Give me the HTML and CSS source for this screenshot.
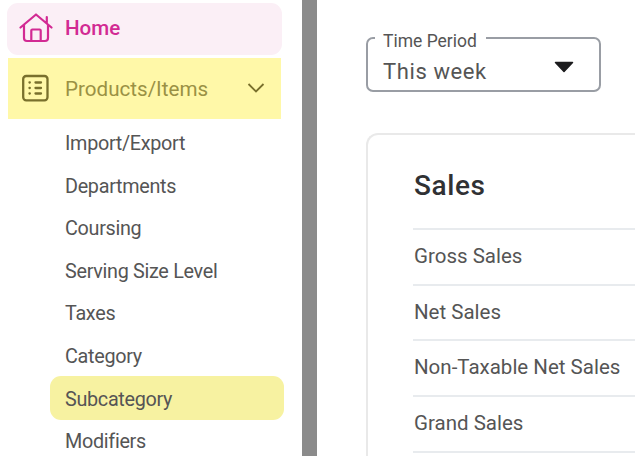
FILE: index.html
```html
<!DOCTYPE html>
<html lang="en">
<head>
<meta charset="utf-8">
<title>Home</title>
<link rel="stylesheet" href="styles.css">
</head>
<body>
<div class="app">
  <nav class="sidebar">
    <a class="nav-item home">
      <svg class="nav-icon" viewBox="0 0 34 32" fill="none" stroke="currentColor" stroke-width="2.2" stroke-linecap="round" stroke-linejoin="round">
        <path d="M1.500 15.500 17 2.500 32.500 15.500M5 13V26q0 3 3 3H26q3 0 3-3V13M12.300 29V18.500q0-1 1-1h7.400q1 0 1 1V29M27.800 10.500V5"/>
      </svg>
      <span class="label">Home</span>
    </a>
    <a class="nav-item products">
      <svg class="nav-icon" viewBox="0 0 34 32" fill="none" stroke="currentColor" stroke-width="2.3" stroke-linecap="round">
        <rect x="5.200" y="3" width="24.300" height="24.300" rx="3"/>
        <path d="M11.500 9.500h.3M11.500 15h.3M11.500 20.500h.3M17.500 9.500h5.500M17.500 15h5.500M17.500 20.500h5.500"/>
      </svg>
      <span class="label">Products/Items</span>
      <svg class="chevron" viewBox="0 0 18 12" fill="none" stroke="currentColor" stroke-width="1.800"><path d="M1.500 1 9 8.500 16.500 1"/></svg>
    </a>
    <ul class="submenu">
      <li><span>Import/Export</span></li>
      <li><span>Departments</span></li>
      <li><span>Coursing</span></li>
      <li><span>Serving Size Level</span></li>
      <li><span>Taxes</span></li>
      <li><span>Category</span></li>
      <li class="selected"><span>Subcategory</span></li>
      <li><span>Modifiers</span></li>
    </ul>
  </nav>
  <div class="divider"></div>
  <main class="content">
    <fieldset class="period">
      <legend><span>Time Period</span></legend>
      <div class="value">
        <span>This week</span>
        <svg class="caret" viewBox="0 0 20 12"><path d="M1.500 1.500h17L10 10.500z" fill="#1c1c1e" stroke="#1c1c1e" stroke-width="1.500" stroke-linejoin="round"/></svg>
      </div>
    </fieldset>
    <section class="card">
      <h2><span>Sales</span></h2>
      <div class="row"><span>Gross Sales</span></div>
      <div class="row"><span>Net Sales</span></div>
      <div class="row"><span>Non-Taxable Net Sales</span></div>
      <div class="row"><span>Grand Sales</span></div>
      <div class="row"></div>
    </section>
  </main>
</div>
</body>
</html>
```

FILE: styles.css
```css
* { box-sizing: border-box; }
body {
  margin: 0;
  background: #fff;
  color: #555;
  font-family: Roboto, "Liberation Sans", sans-serif;
  overflow: hidden;
}
.app { display: flex; width: 635px; height: 456px; overflow: hidden; }
.sidebar { flex: 0 0 302px; padding: 3px 20px 0 7px; }
.nav-item { display: flex; align-items: center; }
.nav-icon { width: 34px; height: 32px; flex: none; }
.home {
  height: 52px;
  padding: 0 0 2px 12px;
  border-radius: 11px;
  background: #fbeff6;
  color: #d22a93;
}
.home .label { margin-left: 12px; font-size: 20.600px; font-weight: 500; }
.products {
  height: 61px;
  margin: 3px 1px 0 1px;
  padding: 0 16px 0 10px;
  background: #fff8a8;
  color: #79702c;
}
.products .label { margin-left: 13px; font-size: 20.600px; color: #9a9144; }
.chevron { width: 18px; height: 12px; margin-left: auto; }
.submenu {
  list-style: none;
  margin: 2px 0 0 43px;
  padding: 0;
  font-size: 19.800px;
  letter-spacing: -0.300px;
}
.submenu li {
  height: 42.600px;
  padding: 2.600px 0 0 15px;
  display: flex;
  align-items: center;
}
.submenu .selected {
  height: 43.600px;
  margin: -0.500px -2px -0.500px 0;
  border-radius: 11px;
  background: #f7f2a1;
}
.divider { flex: 0 0 15px; background: #8b8b8b; }
.content { flex: 1; min-width: 0; padding: 29px 0 0 49px; }
.period {
  width: 235px;
  height: 63px;
  margin: 0;
  padding: 8px 25px 0 15px;
  border: 2px solid #999da4;
  border-radius: 7px;
}
.period legend {
  height: 17px;
  margin-left: -8px;
  padding: 0 9px 0 8px;
  font-size: 17.500px;
  line-height: 24px;
}
.value { display: flex; align-items: center; justify-content: space-between; height: 34px; font-size: 22px; letter-spacing: 0.600px; }
.caret { width: 20px; height: 12px; margin-top: -9px; }
.card {
  height: 340px;
  margin-top: 41px;
  padding-left: 45px;
  border: 2px solid #e9e9e9;
  border-right: 0;
  border-radius: 12px 0 0 0;
}
.card h2 {
  height: 93px;
  margin: 0;
  padding: 8px 0 0 1px;
  display: flex;
  align-items: center;
  font-size: 28px;
  font-weight: 500;
  color: #303134;
  letter-spacing: 0.600px;
}
.row {
  height: 55.700px;
  padding: 0 0 2px 1px;
  display: flex;
  align-items: center;
  border-top: 2px solid #e8ebee;
  font-size: 20.500px;
}
```
